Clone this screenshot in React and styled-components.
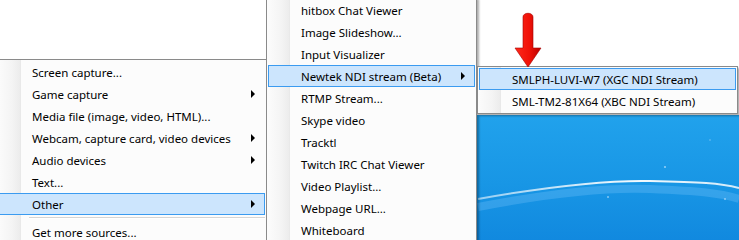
import React from "react";
import styled, { createGlobalStyle, css } from "styled-components";

const GlobalStyle = createGlobalStyle`
  html, body { margin: 0; padding: 0; background: #fff; }
  body { width: 739px; height: 240px; overflow: hidden; }
`;

const Stage = styled.div`
  position: relative;
  width: 739px;
  height: 240px;
  overflow: hidden;
  display: flex;
  flex-direction: column;
  font-family: "Segoe UI", "Noto Sans", sans-serif;
  font-size: 11.5px;
  color: #000;
`;

const AppWindow = styled.div`
  height: 115px;
  background: #fff;
`;

const Desktop = styled.div`
  flex: 1;
  background: linear-gradient(to bottom, #21a2ec 0%, #1896e5 55%, #1189df 100%);
  & > svg { display: block; width: 100%; height: 100%; }
`;

const Menu = styled.div`
  position: absolute;
  left: ${(p) => p.$x}px;
  top: ${(p) => p.$y}px;
  width: ${(p) => p.$w}px;
  box-sizing: border-box;
  border: 1px solid #8a8a8a;
  padding: 1px;
  display: flex;
  flex-direction: column;
  background: linear-gradient(
    to right,
    #fcfcfc 0px,
    #f4f4f4 14px,
    #ececec 22px,
    #e6e6e6 23px,
    #fcfcfc 23px,
    #fcfcfc 100%
  );
  box-shadow: 2px 2px 2px rgba(0, 0, 0, 0.32);
`;

const Item = styled.div`
  height: 22px;
  box-sizing: border-box;
  display: flex;
  align-items: center;
  padding: 0 9px 0 32px;
  border: 1px solid transparent;
  white-space: nowrap;
  ${(p) =>
    p.$active &&
    css`
      background: #cce5fd;
      border-color: #3b9bf0;
    `}
`;

const Label = styled.span`
  flex: 1;
`;

const SubArrow = styled.span`
  width: 0;
  height: 0;
  border-left: 4px solid #000;
  border-top: 4px solid transparent;
  border-bottom: 4px solid transparent;
`;

const Separator = styled.div`
  height: 6px;
  box-sizing: border-box;
  padding-top: 2px;
  margin-left: 30px;
  &::before {
    content: "";
    display: block;
    height: 1px;
    background: #d5d5d5;
    border-bottom: 1px solid #fff;
  }
`;

const Annotation = styled.svg`
  position: absolute;
  left: 512px;
  top: 10px;
`;

const MenuItem = ({ label, sub, active }) => (
  <Item $active={active}>
    <Label>{label}</Label>
    {sub && <SubArrow />}
  </Item>
);

const sourcesMenu = [
  { label: "Screen capture..." },
  { label: "Game capture", sub: true },
  { label: "Media file (image, video, HTML)..." },
  { label: "Webcam, capture card, video devices", sub: true },
  { label: "Audio devices", sub: true },
  { label: "Text..." },
  { label: "Other", sub: true, active: true },
  { sep: true },
  { label: "Get more sources..." },
];

const otherMenu = [
  { label: "hitbox Chat Viewer" },
  { label: "Image Slideshow..." },
  { label: "Input Visualizer" },
  { label: "Newtek NDI stream (Beta)", sub: true, active: true },
  { label: "RTMP Stream..." },
  { label: "Skype video" },
  { label: "Tracktl" },
  { label: "Twitch IRC Chat Viewer" },
  { label: "Video Playlist..." },
  { label: "Webpage URL..." },
  { label: "Whiteboard" },
];

const ndiMenu = [
  { label: "SMLPH-LUVI-W7 (XGC NDI Stream)", active: true },
  { label: "SML-TM2-81X64 (XBC NDI Stream)" },
];

const renderItems = (items) =>
  items.map((it, i) =>
    it.sep ? <Separator key={i} /> : <MenuItem key={i} {...it} />
  );

export default function App() {
  return (
    <>
      <GlobalStyle />
      <Stage>
        <AppWindow />
        <Desktop>
          <svg viewBox="0 0 739 125" preserveAspectRatio="none">
            <defs>
              <linearGradient id="swoosh" x1="478" y1="0" x2="739" y2="0" gradientUnits="userSpaceOnUse">
                <stop offset="0" stopColor="#ffffff" stopOpacity="0.55" />
                <stop offset="0.6" stopColor="#ffffff" stopOpacity="0.95" />
                <stop offset="1" stopColor="#ffffff" stopOpacity="0.8" />
              </linearGradient>
            </defs>
            <path
              d="M478 92 C 540 80, 600 72, 650 74 S 720 78, 739 84"
              fill="none"
              stroke="#8fd0ff"
              strokeOpacity="0.25"
              strokeWidth="8"
            />
            <path
              d="M478 84 C 540 73, 600 65, 650 66 S 720 68, 739 73"
              fill="none"
              stroke="url(#swoosh)"
              strokeWidth="2"
            />
            <circle cx="665" cy="52" r="1" fill="#cfeaff" opacity="0.7" />
            <circle cx="608" cy="82" r="1" fill="#cfeaff" opacity="0.6" />
            <circle cx="725" cy="84" r="1" fill="#cfeaff" opacity="0.6" />
            <circle cx="710" cy="25" r="0.8" fill="#cfeaff" opacity="0.5" />
          </svg>
        </Desktop>

        <Menu $x={-3} $y={59} $w={270}>
          {renderItems(sourcesMenu)}
        </Menu>

        <Menu $x={266} $y={-3} $w={211}>
          {renderItems(otherMenu)}
        </Menu>

        <Menu $x={477} $y={66} $w={261}>
          {renderItems(ndiMenu)}
        </Menu>

        <Annotation width="32" height="60" viewBox="0 0 32 60">
          <defs>
            <linearGradient id="arrowFill" x1="0" y1="0" x2="1" y2="0">
              <stop offset="0" stopColor="#ff2a1c" />
              <stop offset="0.55" stopColor="#f01208" />
              <stop offset="1" stopColor="#b80000" />
            </linearGradient>
          </defs>
          <path
            d="M11 7 C11 2 21 2 21 7 L21 38 L29 38 L16 57 L3 38 L11 38 Z"
            fill="url(#arrowFill)"
            stroke="#a40000"
            strokeWidth="0.6"
          />
        </Annotation>
      </Stage>
    </>
  );
}
